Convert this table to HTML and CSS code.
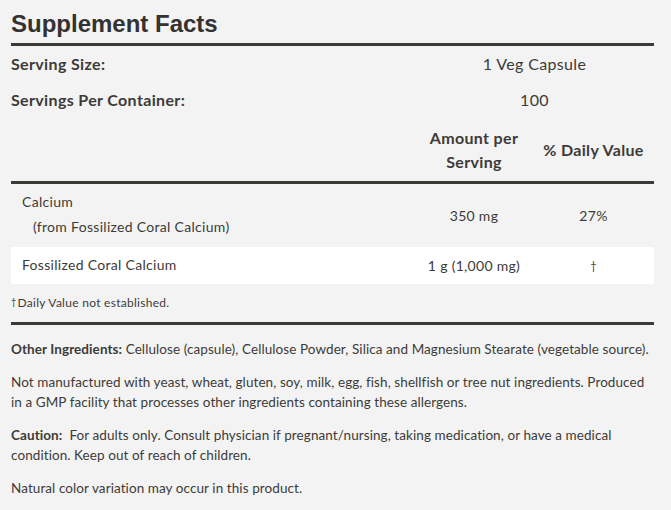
FILE: index.html
```html
<!DOCTYPE html>
<html>
<head>
<meta charset="utf-8">
<link rel="stylesheet" href="styles.css">
</head>
<body>
<div class="facts">
  <h1 class="title">Supplement Facts</h1>
  <table class="tbl">
    <colgroup><col class="c1"><col class="c2"><col class="c3"></colgroup>
    <tr class="serv"><th class="lbl">Serving Size:</th><td colspan="2" class="val">1 Veg Capsule</td></tr>
    <tr class="serv"><th class="lbl">Servings Per Container:</th><td colspan="2" class="val">100</td></tr>
    <tr class="head"><td></td><th class="hc">Amount per<br>Serving</th><th class="hc">% Daily Value</th></tr>
    <tr class="row first"><td class="name">Calcium<div class="sub">(from Fossilized Coral Calcium)</div></td><td class="num">350 mg</td><td class="num">27%</td></tr>
    <tr class="row alt"><td class="name">Fossilized Coral Calcium</td><td class="num">1 g (1,000 mg)</td><td class="num dag">†</td></tr>
  </table>
  <p class="note"><span class="sup">†</span>Daily Value not established.</p>
  <div class="other">
    <p><b>Other Ingredients:</b> Cellulose (capsule), Cellulose Powder, Silica and Magnesium Stearate (vegetable source).</p>
    <p>Not manufactured with yeast, wheat, gluten, soy, milk, egg, fish, shellfish or tree nut ingredients. Produced in a GMP facility that processes other ingredients containing these allergens.</p>
    <p><b>Caution:</b>&nbsp; For adults only. Consult physician if pregnant/nursing, taking medication, or have a medical condition. Keep out of reach of children.</p>
    <p>Natural color variation may occur in this product.</p>
  </div>
</div>
</body>
</html>
```
FILE: styles.css
```css
html, body {
  margin: 0;
  padding: 0;
  background: #f3f3f3;
}
body {
  font-family: "Lato", "Open Sans", sans-serif;
  color: #3d3b38;
}
.facts {
  width: 643px;
  margin-left: 11px;
}
.title {
  font-family: "Liberation Sans", Arial, sans-serif;
  font-weight: bold;
  font-size: 24px;
  line-height: 28px;
  margin: 0;
  padding-top: 10px;
  padding-bottom: 5px;
  border-bottom: 3px solid #3a3a36;
  color: #333230;
}
.tbl {
  width: 643px;
  border-collapse: collapse;
  table-layout: fixed;
  margin-top: 1px;
}
.c1 { width: 404px; }
.c2 { width: 118px; }
.c3 { width: 121px; }
.serv th, .serv td {
  font-size: 16px;
  letter-spacing: 0.35px;
  height: 32px;
  padding: 0 0 4px;
  vertical-align: middle;
}
.serv .lbl {
  text-align: left;
  font-weight: bold;
}
.serv .val {
  text-align: center;
  font-weight: normal;
}
.head td, .head th {
  padding: 7px 0 7px;
  border-bottom: 3px solid #3a3a36;
}
.hc {
  font-size: 16px;
  letter-spacing: 0.35px;
  font-weight: bold;
  line-height: 24px;
  text-align: center;
  vertical-align: middle;
}
.row td {
  font-size: 14px;
  letter-spacing: 0.3px;
  padding: 0;
}
.row .name {
  padding-left: 11px;
}
.first td {
  height: 63px;
  vertical-align: middle;
  line-height: 25px;
}
.first .name {
  padding-bottom: 3px;
  height: 60px;
}
.sub {
  padding-left: 11px;
}
.num {
  text-align: center;
}
.alt td {
  background: #ffffff;
  height: 37px;
  vertical-align: middle;
}
.alt .name {
  padding-bottom: 2px;
  height: 35px;
}
.row .dag {
  font-size: 11px;
}
.note {
  margin: 0;
  padding: 10px 0 12px;
  font-size: 12px;
  letter-spacing: 0.28px;
  line-height: 15px;
  border-bottom: 3px solid #3a3a36;
}
.sup {
  font-size: 9px;
  vertical-align: 2px;
  margin-right: 1px;
}
.other {
  padding-top: 14px;
}
.other p {
  margin: 0 0 13px;
  font-size: 13.5px;
  letter-spacing: 0.08px;
  line-height: 20px;
}
.other b {
  font-weight: bold;
}
```
